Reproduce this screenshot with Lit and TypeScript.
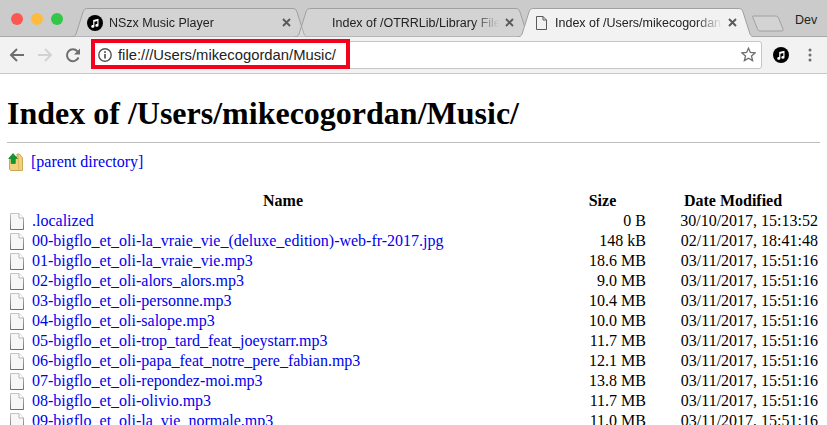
import { LitElement, html, css, svg } from 'lit';
import { customElement } from 'lit/decorators.js';

const files = [
  ['.localized', '0 B', '30/10/2017, 15:13:52'],
  ['00-bigflo_et_oli-la_vraie_vie_(deluxe_edition)-web-fr-2017.jpg', '148 kB', '02/11/2017, 18:41:48'],
  ['01-bigflo_et_oli-la_vraie_vie.mp3', '18.6 MB', '03/11/2017, 15:51:16'],
  ['02-bigflo_et_oli-alors_alors.mp3', '9.0 MB', '03/11/2017, 15:51:16'],
  ['03-bigflo_et_oli-personne.mp3', '10.4 MB', '03/11/2017, 15:51:16'],
  ['04-bigflo_et_oli-salope.mp3', '10.0 MB', '03/11/2017, 15:51:16'],
  ['05-bigflo_et_oli-trop_tard_feat_joeystarr.mp3', '11.7 MB', '03/11/2017, 15:51:16'],
  ['06-bigflo_et_oli-papa_feat_notre_pere_fabian.mp3', '12.1 MB', '03/11/2017, 15:51:16'],
  ['07-bigflo_et_oli-repondez-moi.mp3', '13.8 MB', '03/11/2017, 15:51:16'],
  ['08-bigflo_et_oli-olivio.mp3', '11.7 MB', '03/11/2017, 15:51:16'],
  ['09-bigflo_et_oli-la_vie_normale.mp3', '11.0 MB', '03/11/2017, 15:51:16'],
];

// active tab has no bottom edge, inactive ones let the neighbour's slant show through
const tabShape = (active: boolean) => svg`
  <svg class="tab-shape" viewBox="0 0 238 29">
    <path d="M0 29 C3 29 4 28 5 26 L12 4 C13 1 14 .5 17 .5 L221 .5 C224 .5 225 1 226 4 L233 26 C234 28 235 29 238 29"
      fill="${active ? '#f2f2f2' : 'rgba(255,255,255,.16)'}" stroke="#a0a0a0"/>
  </svg>`;

const musicIcon = html`
  <svg class="music" viewBox="0 0 16 16">
    <circle cx="8" cy="8" r="8" fill="#000"/>
    <path d="M6.200 5 L11.500 3.800 V10.400 A1.600 1.400 0 1 1 10.300 9.100 V6 L7.400 6.700 V11.400 A1.600 1.400 0 1 1 6.200 10.100 Z" fill="#fff"/>
  </svg>`;

const fileIcon = html`
  <svg class="file" viewBox="0 0 14 17">
    <defs>
      <linearGradient id="edge" x1="0" y1="0" x2="0" y2="1">
        <stop offset="0" stop-color="#c4c4c4"/>
        <stop offset="1" stop-color="#6f6f6f"/>
      </linearGradient>
    </defs>
    <path d="M.5.5 H9 L13.5 5 V16.500 H.5 Z" fill="#f7f7f7" stroke="url(#edge)"/>
    <path d="M9 .5 V5 H13.500" fill="#fff" stroke="#b5b5b5"/>
  </svg>`;

@customElement('app-root')
export class AppRoot extends LitElement {
  static styles = css`
    :host {
      display: block;
      width: 827px;
      height: 425px;
      overflow: hidden;
      background: #fff;
      font-family: 'Liberation Serif', serif;
    }

    .strip {
      display: flex;
      align-items: flex-end;
      height: 37px;
      background: #cbcbcb;
      box-shadow: inset 0 -1px 0 #a8a8a8;
      padding-left: 11px;
      box-sizing: border-box;
    }

    .lights {
      display: flex;
      gap: 8px;
      align-self: flex-start;
      margin-top: 13px;
      width: 60px;
      flex: none;
    }

    .light {
      width: 12px;
      height: 12px;
      border-radius: 50%;
    }

    .tab {
      position: relative;
      flex: none;
      width: 238px;
      height: 29px;
      margin-right: -15px;
      display: flex;
      align-items: center;
      padding: 0 18px 0 16px;
      box-sizing: border-box;
      font: 12.5px 'Liberation Sans', sans-serif;
      color: #222;
    }

    .tab-shape {
      position: absolute;
      left: 0;
      top: 0;
      width: 238px;
      height: 29px;
    }

    .tab.active {
      z-index: 1;
    }

    .slot {
      position: relative;
      flex: none;
      width: 16px;
      height: 16px;
      margin-right: 6px;
      display: flex;
      align-items: center;
      justify-content: center;
    }

    .tab-title {
      position: relative;
      flex: 1;
      min-width: 0;
      white-space: nowrap;
      overflow: hidden;
      margin-right: 6px;
      -webkit-mask-image: linear-gradient(to right, #000 84%, transparent);
      mask-image: linear-gradient(to right, #000 84%, transparent);
    }

    .close {
      position: relative;
      flex: none;
      width: 9px;
      height: 9px;
    }

    .music {
      flex: none;
      display: block;
      width: 16px;
      height: 16px;
    }

    .page-icon {
      width: 11px;
      height: 14px;
    }

    .newtab {
      flex: none;
      width: 32px;
      height: 17px;
      margin: 0 0 5px 12px;
    }

    .dev {
      margin-left: 11px;
      align-self: flex-start;
      padding-top: 13px;
      font: 12.5px 'Liberation Sans', sans-serif;
      color: #222;
    }

    .toolbar {
      display: flex;
      align-items: center;
      height: 37px;
      background: #f2f2f2;
      border-bottom: 1px solid #c8c8c8;
      box-sizing: border-box;
      padding-left: 9px;
    }

    .nav {
      flex: none;
      width: 16px;
      height: 16px;
      margin-right: 12px;
    }

    .omnibox {
      position: relative;
      flex: none;
      width: 669px;
      height: 28px;
      background: #fff;
      border: 1px solid #c6c6c6;
      border-radius: 3px;
      box-sizing: border-box;
      display: flex;
      align-items: center;
      padding-left: 4px;
      gap: 6px;
      font: 14.8px 'Liberation Sans', sans-serif;
      color: #222;
    }

    .highlight {
      position: absolute;
      left: -3px;
      top: -3px;
      width: 259px;
      height: 30px;
      border: 4px solid #f5001e;
      box-sizing: border-box;
    }

    .star {
      position: absolute;
      right: 5px;
      top: 5px;
      width: 15px;
      height: 15px;
    }

    .info {
      flex: none;
      width: 14px;
      height: 14px;
    }

    .ext {
      margin-left: 11px;
    }

    .menu {
      flex: none;
      width: 4px;
      height: 14px;
      margin-left: 19px;
    }

    .page {
      padding: 0 7px;
    }

    h1 {
      margin: 0;
      padding-top: 21px;
      font-size: 32px;
      line-height: 37px;
      font-weight: 700;
      color: #000;
    }

    .rule {
      height: 1px;
      background: #bdbdbd;
      margin-top: 10px;
    }

    a {
      color: #0000ee;
      text-decoration: none;
    }

    .parent {
      display: flex;
      align-items: center;
      gap: 8px;
      height: 20px;
      margin-top: 9px;
      padding-left: 1px;
      font-size: 16px;
    }

    .parent svg {
      width: 15px;
      height: 18px;
    }

    table {
      border-collapse: collapse;
      table-layout: fixed;
      width: 811px;
      margin-top: 19px;
      font-size: 16px;
    }

    th {
      font-weight: 700;
      padding: 0;
      height: 20px;
      text-align: center;
    }

    th.pad-size,
    td.size {
      padding-right: 34px;
    }

    th.pad-date {
      padding-right: 32px;
    }

    td {
      padding: 0;
      height: 20px;
      white-space: nowrap;
    }

    .name {
      display: flex;
      align-items: center;
      gap: 8px;
      height: 20px;
      padding-left: 3px;
    }

    .file {
      flex: none;
      width: 14px;
      height: 17px;
    }

    .size {
      text-align: right;
    }

    .date {
      text-align: right;
    }
  `;

  render() {
    const close = html`<svg class="close" viewBox="0 0 9 9"><path d="M1 1 L8 8 M8 1 L1 8" stroke="#5a5a5a" stroke-width="1.9"/></svg>`;
    return html`
      <div class="strip">
        <div class="lights">
          <span class="light" style="background:#fc5753"></span>
          <span class="light" style="background:#fdbc40"></span>
          <span class="light" style="background:#33c748"></span>
        </div>
        <div class="tab">
          ${tabShape(false)}
          <span class="slot">${musicIcon}</span>
          <span class="tab-title">NSzx Music Player</span>
          ${close}
        </div>
        <div class="tab">
          ${tabShape(false)}
          <span class="slot"></span>
          <span class="tab-title">Index of /OTRRLib/Library Files</span>
          ${close}
        </div>
        <div class="tab active">
          ${tabShape(true)}
          <span class="slot">
            <svg class="page-icon" viewBox="0 0 11 14">
              <path d="M.5.5 H7 L10.500 4 V13.500 H.5 Z M7 .5 V4 H10.500" fill="none" stroke="#5a5a5a"/>
            </svg>
          </span>
          <span class="tab-title">Index of /Users/mikecogordan/Music/</span>
          ${close}
        </div>
        <svg class="newtab" viewBox="0 0 32 17">
          <path d="M1 1 H23 C25 1 26 2 26.500 3 L31 14 C31.500 15.500 31 16 29 16 H8 C6.500 16 6 15 5.500 14 L.7 2 C.5 1.300 .6 1 1 1 Z" fill="#d3d3d3" stroke="#a0a0a0"/>
        </svg>
        <span class="dev">Dev</span>
      </div>
      <div class="toolbar">
        <svg class="nav" viewBox="0 0 16 16"><path d="M15 8 H2 M8 2 L2 8 L8 14" fill="none" stroke="#6e6e6e" stroke-width="2"/></svg>
        <svg class="nav" viewBox="0 0 16 16"><path d="M1 8 H14 M8 2 L14 8 L8 14" fill="none" stroke="#d2d2d2" stroke-width="2"/></svg>
        <svg class="nav" viewBox="0 0 16 16">
          <path d="M13.500 10.500 A6 6 0 1 1 12.500 4.300" fill="none" stroke="#6e6e6e" stroke-width="2"/>
          <path d="M15 1.500 V7.500 H9 Z" fill="#6e6e6e"/>
        </svg>
        <div class="omnibox">
          <svg class="info" viewBox="0 0 14 14">
            <circle cx="7" cy="7" r="6.200" fill="none" stroke="#555" stroke-width="1.400"/>
            <path d="M7 6 V10.500 M7 3.200 V4.900" stroke="#555" stroke-width="1.700"/>
          </svg>
          <span>file:///Users/mikecogordan/Music/</span>
          <span class="highlight"></span>
          <svg class="star" viewBox="0 0 15 15">
            <path d="M7.500 1.200 L9.400 5.500 L14 5.900 L10.500 9 L11.600 13.600 L7.500 11.200 L3.400 13.600 L4.500 9 L1 5.900 L5.600 5.500 Z" fill="none" stroke="#6e6e6e" stroke-width="1.300"/>
          </svg>
        </div>
        <span class="ext">${musicIcon}</span>
        <svg class="menu" viewBox="0 0 4 14">
          <circle cx="2" cy="2" r="1.500" fill="#6e6e6e"/>
          <circle cx="2" cy="7" r="1.500" fill="#6e6e6e"/>
          <circle cx="2" cy="12" r="1.500" fill="#6e6e6e"/>
        </svg>
      </div>
      <div class="page">
        <h1>Index of /Users/mikecogordan/Music/</h1>
        <div class="rule"></div>
        <div class="parent">
          <svg viewBox="0 0 15 18">
            <path d="M2 4 H9 V1 H11.500 L14.500 5 V17.500 H2.500 L1.500 16 V9 Z" fill="#f1d27c" stroke="#c9a757"/>
            <path d="M10 1.500 L11 17" stroke="#dcb55f"/>
            <path d="M5 .5 L9.500 5.500 H7.300 V10.500 H3.200 V5.500 H.7 Z" fill="#0c9a30" stroke="#0b7426" stroke-width=".6"/>
          </svg>
          <a href="#">[parent directory]</a>
        </div>
        <table>
          <colgroup><col style="width:552px"><col style="width:121px"><col style="width:138px"></colgroup>
          <thead>
            <tr><th>Name</th><th class="pad-size">Size</th><th class="pad-date">Date Modified</th></tr>
          </thead>
          <tbody>
            ${files.map(([name, size, date]) => html`
              <tr>
                <td><div class="name">${fileIcon}<a href="#">${name}</a></div></td>
                <td class="size">${size}</td>
                <td class="date">${date}</td>
              </tr>`)}
          </tbody>
        </table>
      </div>
    `;
  }
}

declare global {
  interface HTMLElementTagNameMap {
    'app-root': AppRoot;
  }
}
